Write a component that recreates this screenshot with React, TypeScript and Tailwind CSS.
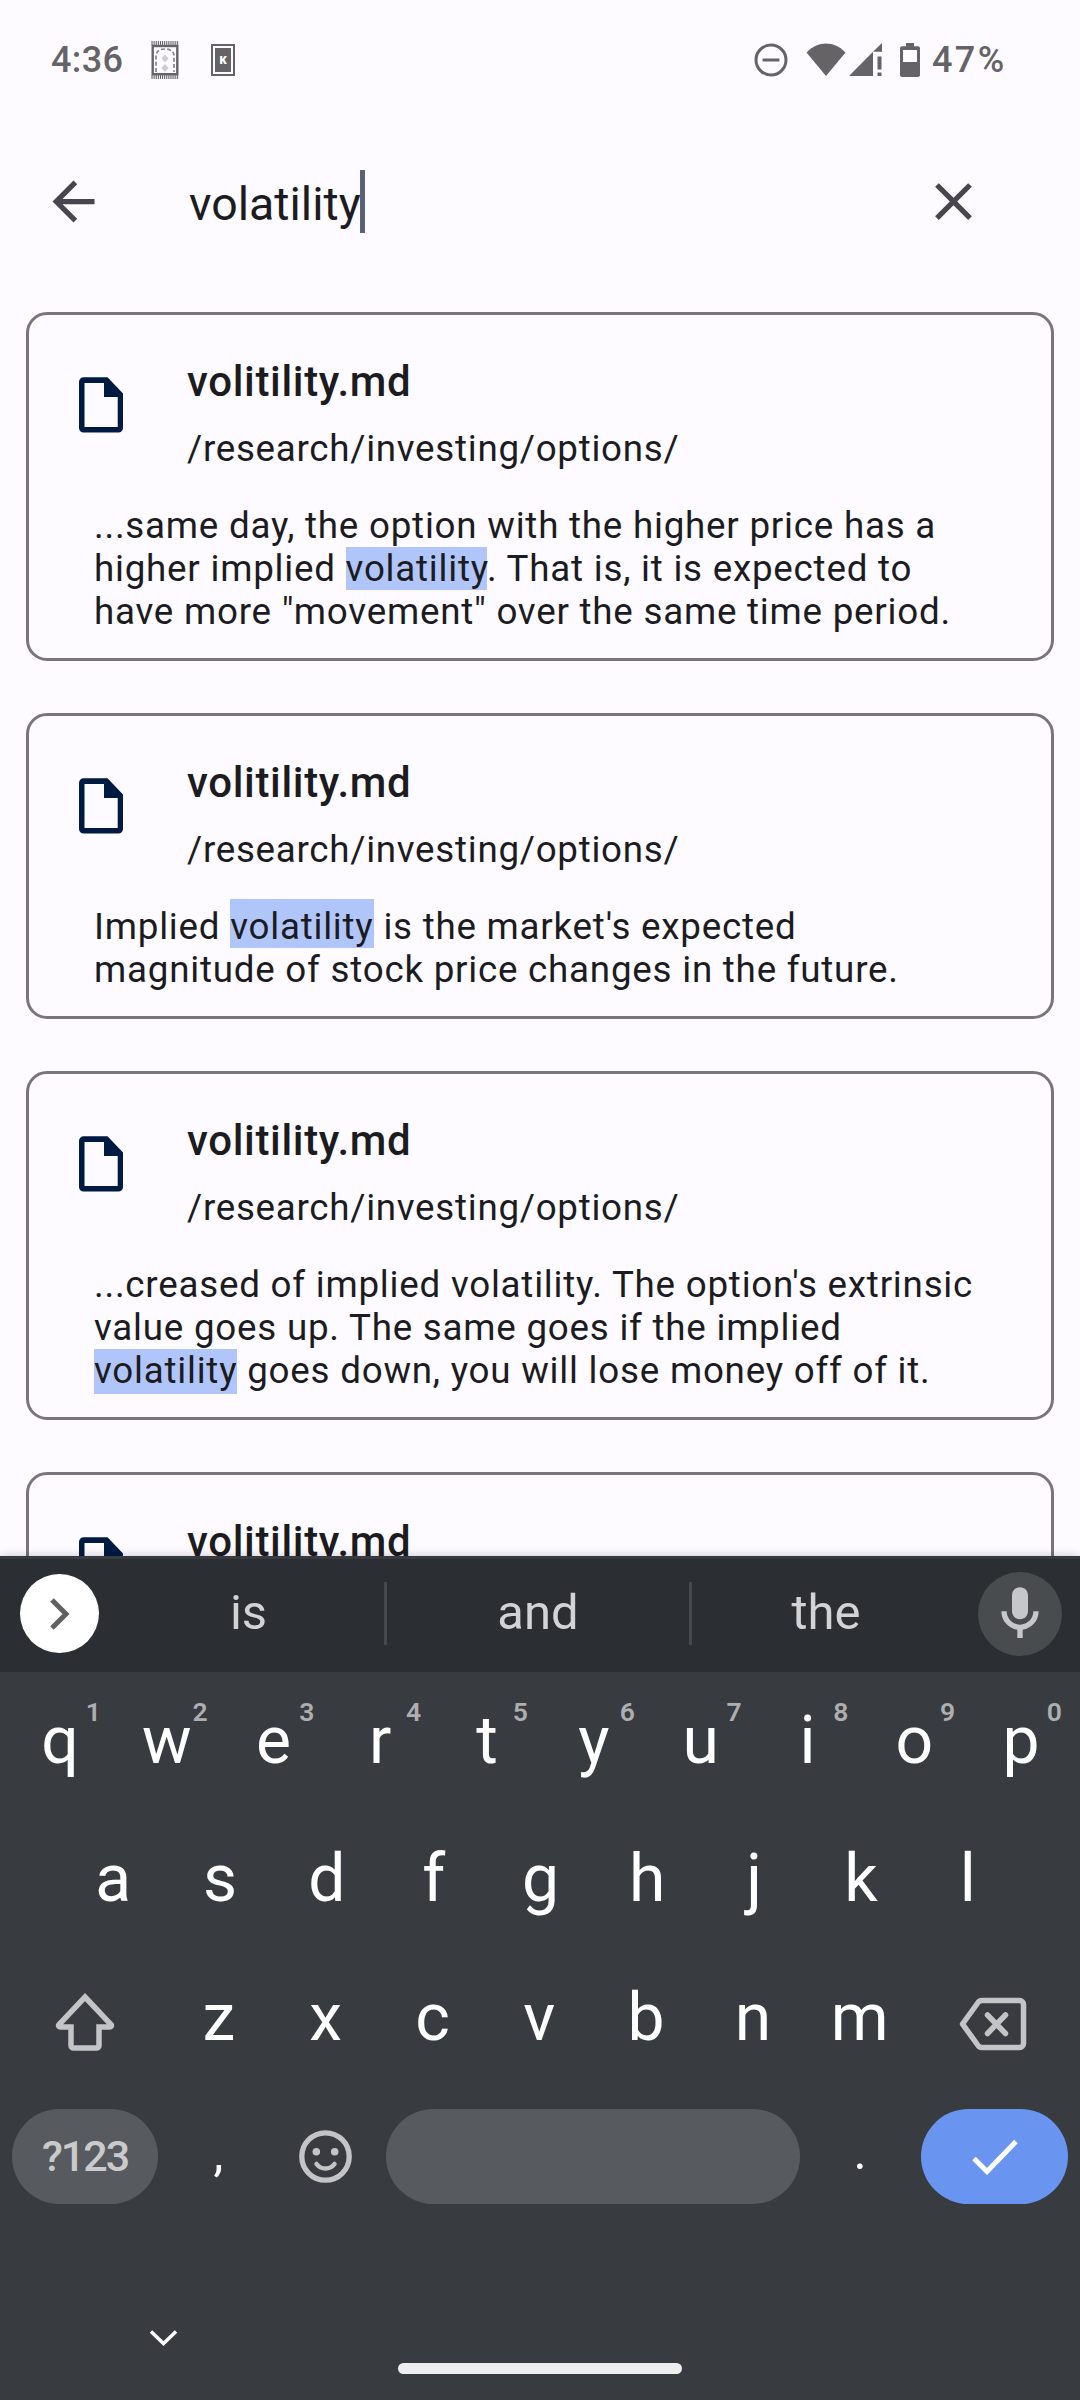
import type { ReactNode } from "react";

type Result = { snippet?: ReactNode };

const Mark = ({ children, className = "" }: { children: ReactNode; className?: string }) => (
  <mark className={"bg-[#b0c6fb] text-[#1c1b1f] " + className}>{children}</mark>
);

const results: Result[] = [
  {
    snippet: (
      <>
        ...same day, the option with the higher price has a<br />
        higher implied <Mark>volatility</Mark>. That is, it is expected to<br />
        have more "movement" over the same time period.
      </>
    ),
  },
  {
    snippet: (
      <>
        Implied <Mark className="pt-[6px]">volatility</Mark> is the market's expected<br />
        magnitude of stock price changes in the future.
      </>
    ),
  },
  {
    snippet: (
      <>
        ...creased of implied volatility. The option's extrinsic<br />
        value goes up. The same goes if the implied<br />
        <Mark className="pb-[2px]">volatility</Mark> goes down, you will lose money off of it.
      </>
    ),
  },
  {},
];

function RugIcon() {
  return (
    <svg className="h-[38px] w-[28px]" viewBox="0 0 28 38" fill="none">
      <path d="M0.5 2H28M0.5 36H28" stroke="#666367" strokeWidth="4" strokeDasharray="1.1 1" />
      <rect x="1.7" y="5" width="24.6" height="28.2" stroke="#666367" strokeWidth="2.4" />
      <path d="M5 31V15c0-5 4-7 9-7s9 2 9 7v16" stroke="#858387" strokeWidth="1.700" strokeDasharray="4 2.2" />
      <path d="M14 13.500l3.600 4-3.600 4-3.600-4zM14 23l3.600 4-3.600 4-3.600-4z" fill="#cfcdd1" />
    </svg>
  );
}

function CardIcon() {
  return (
    <div className="flex h-[32px] w-[24px] items-center justify-center border-2 border-[#666367] bg-[#fdfbff]">
      <div className="flex h-[24px] w-[16px] items-center justify-center bg-[#666367] font-['Open_Sans'] text-[11px] font-extrabold leading-none text-white">
        K
      </div>
    </div>
  );
}

function StatusBar() {
  return (
    <div className="flex h-[119px] items-center pl-[51px] pr-[75px] text-[36px] font-medium text-[#666367]">
      <span className="w-[100px] tracking-[0.4px]">4:36</span>
      <RugIcon />
      <div className="ml-[32px]">
        <CardIcon />
      </div>
      <div className="flex-1" />
      <svg className="h-[34px] w-[34px]" viewBox="0 0 34 34" fill="none" stroke="#666367" strokeWidth="3">
        <circle cx="17" cy="17" r="15" />
        <path d="M8.600 17h16.800" />
      </svg>
      <svg className="ml-[18px] h-[34px] w-[40px]" viewBox="0 0 40 34" fill="#666367">
        <path d="M0.500 9.500C12-2.500 28-2.500 39.500 9.500L20 33z" />
      </svg>
      <svg className="ml-[3px] h-[34px] w-[33px]" viewBox="0 0 33 34" fill="#666367">
        <path d="M0 33L24 8.800V33zM24 8.800L33 0v8.800zM28.500 13.500h4v13h-4zM28.500 29.500h4V33h-4z" />
      </svg>
      <svg className="ml-[18px] h-[34px] w-[20px]" viewBox="0 0 20 34" fill="#666367">
        <path fillRule="evenodd" d="M6 0h8v3.300h4a2 2 0 0 1 2 2V32a2 2 0 0 1-2 2H2a2 2 0 0 1-2-2V5.300a2 2 0 0 1 2-2h4zM3 7v12h14V7z" />
      </svg>
      <span className="ml-[12px] w-[73px] whitespace-nowrap tracking-[2.400px]">47%</span>
    </div>
  );
}

function SearchBar() {
  return (
    <div className="flex h-[193px] items-start pl-[42px] pr-[95px] pt-[51px]">
      <svg className="h-[63px] w-[63px]" viewBox="0 0 24 24" fill="#49454f">
        <path d="M20 11H7.830l5.590-5.590L12 4l-8 8 8 8 1.410-1.410L7.830 13H20v-2z" />
      </svg>
      <span className="ml-[84px] mt-[3px] text-[46.500px] leading-[63px] text-[#1c1b1f]">volatility</span>
      <div className="-ml-px h-[63px] w-[5px] bg-[#5a6174]" />
      <div className="flex-1" />
      <svg className="h-[63px] w-[63px]" viewBox="0 0 24 24" fill="#49454f">
        <path d="M19 6.410L17.590 5 12 10.590 6.410 5 5 6.410 10.590 12 5 17.590 6.410 19 12 13.410 17.590 19 19 17.590 13.410 12z" />
      </svg>
    </div>
  );
}

function FileIcon() {
  return (
    <svg className="h-[56px] w-[44px]" viewBox="0 0 44 56">
      <path
        fill="#001a41"
        fillRule="evenodd"
        d="M5 0.300H28.500L44 16.500V51a4.600 4.600 0 0 1-4.600 4.600H4.600A4.600 4.600 0 0 1 0 51V5A4.700 4.700 0 0 1 5 0.300zM5.500 6v44h33.200V20H25V6z"
      />
    </svg>
  );
}

function ResultCard({ snippet }: Result) {
  return (
    <article className="min-h-[306px] shrink-0 rounded-[21px] border-[3px] border-[#79747e] pb-[25px] pl-[50px] pt-[35px] text-[#1c1b1f]">
      <div className="flex">
        <div className="w-[108px] pt-[27px]">
          <FileIcon />
        </div>
        <div>
          <h2 className="text-[42px] font-medium leading-[63px] tracking-[0.660px]">volitility.md</h2>
          {snippet && (
            <p className="mt-[9px] text-[36.750px] leading-[53px] tracking-[0.720px]">/research/investing/options/</p>
          )}
        </div>
      </div>
      {snippet && (
        <p className="ml-[15px] mt-[29px] whitespace-nowrap text-[36.750px] leading-[43px] tracking-[0.765px]">{snippet}</p>
      )}
    </article>
  );
}

function Suggestions() {
  return (
    <div className="flex h-[116px] items-center border-t-[3px] border-[#373b3f] bg-[#2b2e32] pb-[4px] pl-[20px] pr-[18px] text-[49px] leading-[57px] text-[#d2d3d4]">
      <div className="flex size-[79px] items-center justify-center rounded-full bg-white">
        <svg className="h-[32px] w-[20px]" viewBox="0 0 20 32" fill="none" stroke="#616161" strokeWidth="5">
          <path d="M2 2l14 14L2 30" />
        </svg>
      </div>
      <span className="ml-[14px] w-[271px] pb-[3px] text-center">is</span>
      <div className="h-[63px] w-[3px] bg-[#45484d]" />
      <span className="w-[302px] pb-[3px] text-center">and</span>
      <div className="h-[63px] w-[3px] bg-[#45484d]" />
      <span className="w-[268px] pb-[3px] text-center">the</span>
      <div className="ml-[18px] flex size-[84px] items-center justify-center rounded-full bg-[#484c4f]">
        <svg className="size-[64px]" viewBox="0 0 24 24" fill="#c6c7c9">
          <path d="M12 14c1.660 0 3-1.340 3-3V5c0-1.660-1.340-3-3-3S9 3.340 9 5v6c0 1.660 1.340 3 3 3z" />
          <path d="M17 11c0 2.760-2.240 5-5 5s-5-2.240-5-5H5c0 3.530 2.610 6.430 6 6.920V21h2v-3.080c3.390-.49 6-3.390 6-6.920h-2z" />
        </svg>
      </div>
    </div>
  );
}

function Key({ label, hint }: { label: string; hint?: string }) {
  return (
    <div className="relative w-[106.800px] pl-[1px] text-center text-[66px] leading-[137px] text-white">
      {label}
      {hint && (
        <span className="absolute right-[12px] top-[24px] text-[26.500px] font-semibold leading-[32px] text-[#adaeb0]">
          {hint}
        </span>
      )}
    </div>
  );
}

function Keyboard() {
  return (
    <div className="flex h-[728px] flex-col bg-[#383b3f] px-[6px]">
      <div className="flex h-[138px]">
        {"qwertyuiop".split("").map((c, i) => (
          <Key key={c} label={c} hint={String((i + 1) % 10)} />
        ))}
      </div>
      <div className="flex h-[138px] justify-center">
        {"asdfghjkl".split("").map((c) => (
          <Key key={c} label={c} />
        ))}
      </div>
      <div className="flex h-[138px] items-center">
        <div className="flex w-[159px] justify-center pr-[2px]">
          <svg className="mt-[10px] h-[60px] w-[62px]" viewBox="0 0 62 60" fill="none" stroke="#c3c4c6" strokeWidth="5.500">
            <path d="M31 5L57 32.500c1 1.200 0 2.500-1.500 2.500H45V53.500a2.500 2.500 0 0 1-2.500 2.500H19.500A2.500 2.500 0 0 1 17 53.500V35H6.500C5 35 4 33.700 5 32.500z" />
          </svg>
        </div>
        {"zxcvbnm".split("").map((c) => (
          <Key key={c} label={c} />
        ))}
        <svg className="ml-[46px] mt-[14px] h-[54px] w-[68px]" viewBox="0 0 68 54" fill="none" stroke="#c3c4c6" strokeWidth="5.500" strokeLinejoin="round">
          <path d="M23 3.500H60.500a4 4 0 0 1 4 4V46.500a4 4 0 0 1-4 4H23a5 5 0 0 1-4.300-2.500L3.500 27 18.700 6A5 5 0 0 1 23 3.500z" />
          <path d="M28.500 18l18 18.500M46.500 18l-18 18.500" strokeLinecap="round" />
        </svg>
      </div>
      <div className="flex h-[138px] items-center pl-[6px] pr-[6px] pt-[3px]">
        <div className="flex h-[95px] w-[146px] items-center justify-center rounded-full bg-[#575a5e] pb-[1px] text-[43px] font-medium tracking-[-2px] text-[#c9cacc]">
          ?123
        </div>
        <span className="ml-[7px] w-[107px] pb-[8px] text-center text-[50px] leading-[120px] text-white">,</span>
        <svg className="ml-[27px] size-[53px]" viewBox="0 0 53 53" fill="none" stroke="#c3c4c6">
          <circle cx="26.500" cy="26.500" r="23.700" strokeWidth="5.300" />
          <circle cx="17.300" cy="21.700" r="3.800" fill="#c3c4c6" stroke="none" />
          <circle cx="35.700" cy="21.700" r="3.800" fill="#c3c4c6" stroke="none" />
          <path d="M17.500 34c4.500 6 13.500 6 18 0" strokeWidth="4.500" strokeLinecap="round" />
        </svg>
        <div className="ml-[34px] h-[95px] w-[414px] rounded-full bg-[#575a5e]" />
        <span className="w-[120px] pb-[9px] text-center text-[50px] leading-[120px] text-white">.</span>
        <div className="ml-[1px] flex h-[95px] w-[147px] items-center justify-center rounded-full bg-[#6995f0]">
          <svg className="h-[36px] w-[46px]" viewBox="0 0 46 36" fill="none" stroke="white" strokeWidth="5">
            <path d="M2 19.500L15 32.500 44 2.500" />
          </svg>
        </div>
      </div>
      <div className="flex h-[176px] pt-[105px]">
        <svg className="ml-[143px] h-[18px] w-[29px]" viewBox="0 0 29 18" fill="none" stroke="white" strokeWidth="3.500">
          <path d="M2 2.500l12.500 12 12.500-12" />
        </svg>
        <div className="ml-[220px] mt-[34px] h-[11px] w-[284px] rounded-full bg-[#eeeeee]" />
      </div>
    </div>
  );
}

export default function App() {
  return (
    <div className="flex h-[2400px] w-[1080px] flex-col overflow-hidden bg-[#fdfbff] font-[Roboto,sans-serif]">
      <StatusBar />
      <SearchBar />
      <div className="flex h-[1244px] flex-col gap-[52px] overflow-hidden px-[26px]">
        {results.map((r, i) => (
          <ResultCard key={i} {...r} />
        ))}
      </div>
      <div className="relative shadow-[0_0_9px_rgba(0,0,0,0.22)]">
        <Suggestions />
        <Keyboard />
      </div>
    </div>
  );
}
